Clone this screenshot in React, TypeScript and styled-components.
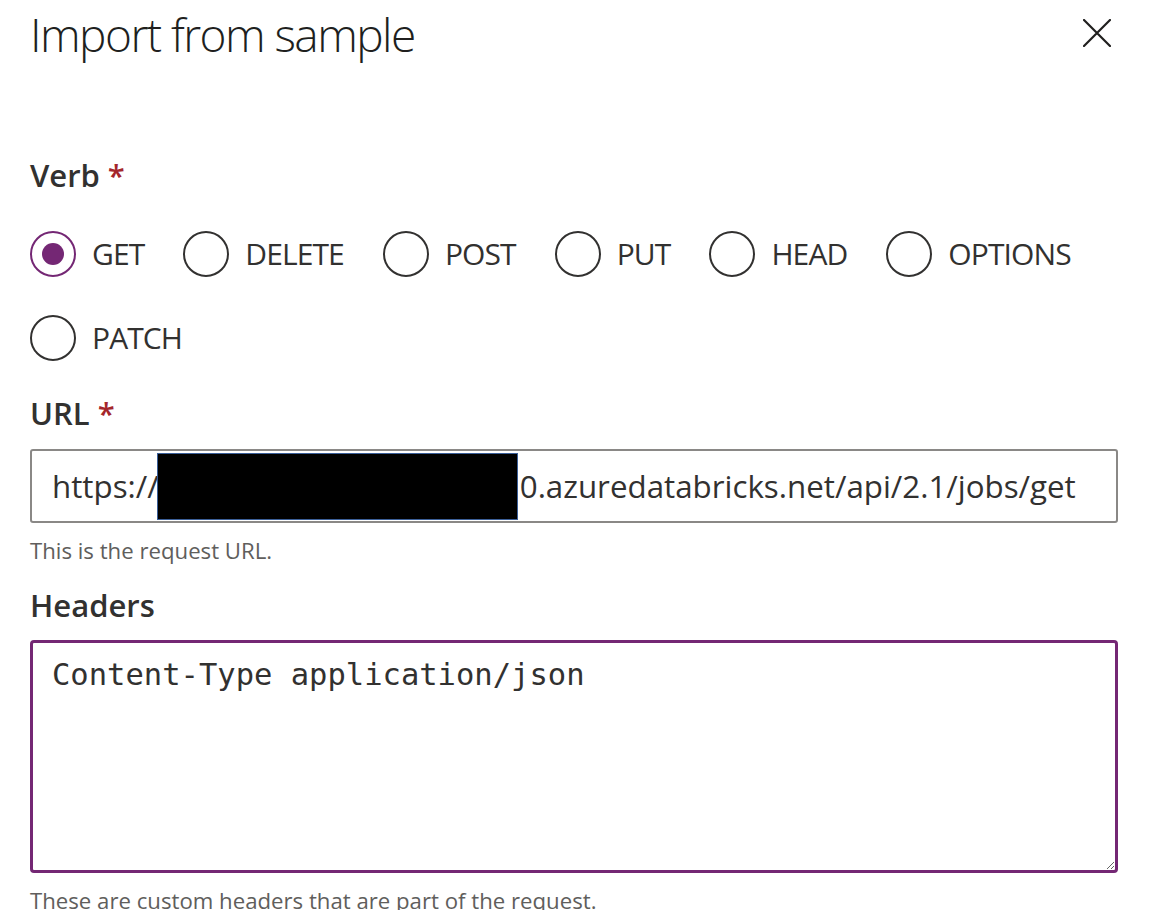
import React from "react";
import styled, { createGlobalStyle } from "styled-components";

const GlobalStyle = createGlobalStyle`
  html, body {
    margin: 0;
    padding: 0;
    background: #ffffff;
  }
  body {
    font-family: "Open Sans", "Noto Sans", sans-serif;
    color: #323130;
    overflow: hidden;
  }
  * { box-sizing: border-box; }
`;

const Page = styled.div`
  width: 1158px;
  height: 910px;
  padding: 0 40px 0 30px;
  overflow: hidden;
`;

const Header = styled.header`
  display: flex;
  justify-content: space-between;
  align-items: flex-start;
  padding-top: 11px;
`;

const Title = styled.h1`
  margin: 0;
  font-family: "Open Sans", sans-serif;
  font-weight: 300;
  font-size: 46px;
  line-height: 47px;
  color: #201f1e;
  letter-spacing: -1.55px;
`;

const CloseButton = styled.button`
  width: 40px;
  height: 40px;
  margin-top: 2px;
  margin-right: 1px;
  padding: 0;
  border: none;
  background: transparent;
  display: flex;
  align-items: center;
  justify-content: center;
  cursor: pointer;
`;

const Form = styled.div`
  display: flex;
  flex-direction: column;
  margin-top: 97px;
`;

const FieldLabel = styled.div<{ $gap?: number }>`
  font-family: "Open Sans", sans-serif;
  font-weight: 600;
  font-size: 31px;
  line-height: 40px;
  color: #323130;
  margin-top: ${(p) => p.$gap ?? 0}px;
`;

const Required = styled.span`
  color: #a4262c;
  margin-left: 8px;
  font-weight: 600;
`;

const RadioGroup = styled.div`
  display: flex;
  flex-wrap: wrap;
  column-gap: 39px;
  row-gap: 38px;
  margin-top: 36px;
`;

const RadioItem = styled.label`
  display: flex;
  align-items: center;
  height: 46px;
  cursor: pointer;
`;

const RadioCircle = styled.span<{ $checked?: boolean }>`
  width: 46px;
  height: 46px;
  border-radius: 50%;
  border: 2px solid ${(p) => (p.$checked ? "#742774" : "#323130")};
  display: flex;
  align-items: center;
  justify-content: center;
  flex-shrink: 0;

  &::after {
    content: "";
    width: 22px;
    height: 22px;
    border-radius: 50%;
    background: #742774;
    display: ${(p) => (p.$checked ? "block" : "none")};
  }
`;

const RadioText = styled.span`
  margin-left: 16px;
  font-size: 30px;
  line-height: 40px;
  color: #323130;
  letter-spacing: -0.9px;
`;

const UrlField = styled.div`
  margin-top: 16px;
  height: 74px;
  border: 2px solid #8a8886;
  border-radius: 3px;
  display: flex;
  align-items: center;
  padding-left: 20px;
  font-size: 31.3px;
  color: #323130;
  white-space: nowrap;
  overflow: hidden;
`;

const Redaction = styled.span`
  display: inline-block;
  width: 361px;
  height: 67px;
  background: #000;
  border: 1px solid #3b5f99;
  margin: 0 2px 0 -2px;
  flex-shrink: 0;
`;

const Helper = styled.div<{ $gap?: number }>`
  margin-top: ${(p) => p.$gap ?? 0}px;
  font-size: 22.2px;
  line-height: 30px;
  color: #605e5c;
`;

const HeadersArea = styled.textarea`
  margin-top: 15px;
  height: 233px;
  width: 100%;
  border: 3px solid #742774;
  border-radius: 4px;
  padding: 12px 19px;
  font-family: "DejaVu Sans Mono", "Liberation Mono", monospace;
  font-size: 30.5px;
  line-height: 40px;
  color: #323130;
  resize: vertical;
  outline: none;
  background: #fff;
  display: block;
`;

const verbs = ["GET", "DELETE", "POST", "PUT", "HEAD", "OPTIONS", "PATCH"];

export default function App() {
  return (
    <>
      <GlobalStyle />
      <Page>
        <Header>
          <Title>Import from sample</Title>
          <CloseButton aria-label="Close">
            <svg width="28" height="28" viewBox="0 0 28 28">
              <path
                d="M1 1 L27 27 M27 1 L1 27"
                stroke="#201f1e"
                strokeWidth="2.2"
                strokeLinecap="round"
                fill="none"
              />
            </svg>
          </CloseButton>
        </Header>
        <Form>
          <FieldLabel>
            Verb<Required>*</Required>
          </FieldLabel>
          <RadioGroup role="radiogroup">
            {verbs.map((v) => (
              <RadioItem key={v}>
                <RadioCircle $checked={v === "GET"} />
                <RadioText>{v}</RadioText>
              </RadioItem>
            ))}
          </RadioGroup>
          <FieldLabel $gap={32}>
            URL<Required>*</Required>
          </FieldLabel>
          <UrlField>
            <span>https://</span>
            <Redaction />
            <span>0.azuredatabricks.net/api/2.1/jobs/get</span>
          </UrlField>
          <Helper $gap={13}>This is the request URL.</Helper>
          <FieldLabel $gap={19}>Headers</FieldLabel>
          <HeadersArea defaultValue="Content-Type application/json" spellCheck={false} />
          <Helper $gap={13}>These are custom headers that are part of the request.</Helper>
        </Form>
      </Page>
    </>
  );
}
